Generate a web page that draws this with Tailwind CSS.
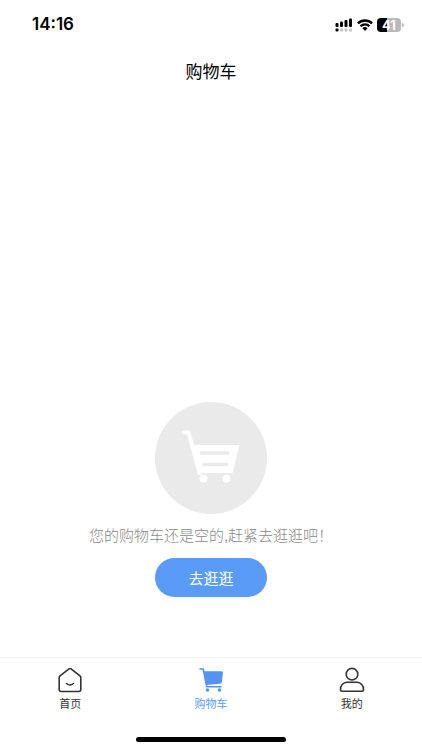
<!DOCTYPE html>
<html lang="zh-CN">
<head>
  <meta charset="UTF-8" />
  <meta name="viewport" content="width=device-width, initial-scale=1.0" />
  <title>购物车</title>
  <script src="https://cdn.jsdelivr.net/npm/@tailwindcss/browser@4"></script>
</head>
<body class="min-h-screen flex flex-col bg-white text-black font-['Liberation_Sans','Noto_Sans_CJK_SC',sans-serif]">
  <!-- Status bar -->
  <div class="h-12 flex items-center justify-between pl-8 pr-[18px] pt-0.5 font-[Inter,sans-serif]">
    <span class="text-[17px] font-semibold">14:16</span>
    <div class="flex items-center gap-1">
      <svg class="w-[18px] h-[14px]" viewBox="0 0 18 14" aria-label="信号">
        <g fill="#000">
          <rect x="0.5" y="5" width="3" height="4" rx="1" />
          <rect x="5" y="3.5" width="3" height="5.5" rx="1" />
          <rect x="9.5" y="2" width="3" height="7" rx="1" />
          <rect x="14" y="0.500" width="3" height="8.500" rx="1" />
          <rect x="0.5" y="10.5" width="3" height="3" rx="1" />
        </g>
        <g fill="#c4c4c4">
          <rect x="5" y="10.5" width="3" height="3" rx="1" />
          <rect x="9.5" y="10.5" width="3" height="3" rx="1" />
          <rect x="14" y="10.5" width="3" height="3" rx="1" />
        </g>
      </svg>
      <svg class="w-4 h-3" viewBox="0 0 16 12" fill="none" stroke="#000" stroke-width="2.3" aria-label="Wi-Fi">
        <path d="M0.9 4.4a10.2 10.2 0 0 1 14.2 0" />
        <path d="M3.5 7.3a6.4 6.4 0 0 1 9 0" />
        <path d="M8 12L5.4 9.3a3.8 3.8 0 0 1 5.2 0z" fill="#000" stroke="none" />
      </svg>
      <div class="flex items-center gap-px">
        <div class="w-6 h-[14px] rounded-[4px] bg-linear-to-r from-black from-42% to-[#b9b9b9] to-42% flex items-center justify-center text-white text-[13px] leading-none font-bold">41</div>
        <div class="w-0.5 h-1 rounded-r bg-[#b9b9b9]"></div>
      </div>
    </div>
  </div>

  <header class="h-[50px] flex items-center justify-center">
    <h1 class="text-[17px]">购物车</h1>
  </header>

  <!-- Empty cart -->
  <main class="flex-1 flex flex-col items-center justify-end pb-15">
    <svg class="size-28" viewBox="0 0 112 112" aria-hidden="true">
      <circle cx="56" cy="56" r="56" fill="#eaeaea" />
      <path d="M28.5 30.5h5L44.5 71" fill="none" stroke="#fff" stroke-width="4" stroke-linecap="round" stroke-linejoin="round" />
      <path d="M36 43h48.500L77.500 71H43.500z" fill="#fff" />
      <path d="M46.500 51H73M49 62.500h22.500" stroke="#eaeaea" stroke-width="3.500" stroke-linecap="round" />
      <circle cx="48.500" cy="76.500" r="4" fill="#fff" />
      <circle cx="71.500" cy="76.500" r="4" fill="#fff" />
    </svg>
    <p class="mt-2.5 text-[15px] leading-6 text-[#888] font-light">您的购物车还是空的,赶紧去逛逛吧！</p>
    <button type="button" class="mt-2.5 w-28 h-[39px] pt-1 rounded-full bg-[#5b9bf8] text-white text-[15px] cursor-pointer">去逛逛</button>
  </main>

  <!-- Tab bar -->
  <nav class="border-t border-[#f0f0f0] grid grid-cols-3 pt-2 pb-[25px] text-[11px] leading-4 text-[#333]">
    <a href="#" class="flex flex-col items-center gap-0.5">
      <svg class="size-7" viewBox="0 0 28 28" fill="none" stroke="#333" stroke-width="1.600" stroke-linecap="round" stroke-linejoin="round">
        <path d="M13 2.900a1.600 1.600 0 0 1 2 0l9 7a2 2 0 0 1 .8 1.600V23.500a2 2 0 0 1-2 2H5.200a2 2 0 0 1-2-2V11.500a2 2 0 0 1 .8-1.600z" />
        <path d="M10.500 17.500q3.500 3 7 0" />
      </svg>
      首页
    </a>
    <a href="#" class="flex flex-col items-center gap-0.5 text-[#5b9bf8]" aria-current="page">
      <svg class="size-7" viewBox="0 0 28 28" fill="#5493f2">
        <path d="M3 3h3.200L9.800 20.800H24" fill="none" stroke="#5493f2" stroke-width="1.600" stroke-linecap="round" stroke-linejoin="round" />
        <path d="M6.800 5.200H24.600a1.400 1.400 0 0 1 1.400 1.500L24.800 16.300a1.600 1.600 0 0 1-1.500 1.400L9.200 19z" />
        <circle cx="10.500" cy="24" r="1.800" />
        <circle cx="22.500" cy="24" r="1.800" />
      </svg>
      购物车
    </a>
    <a href="#" class="flex flex-col items-center gap-0.5">
      <svg class="size-7" viewBox="0 0 28 28" fill="none" stroke="#333" stroke-width="1.600" stroke-linejoin="round">
        <circle cx="14" cy="8.200" r="5.800" />
        <path d="M9 16.300h10a6.800 6.800 0 0 1 6.500 7.300a1.700 1.700 0 0 1-1.700 1.700H4.200a1.700 1.700 0 0 1-1.700-1.700A6.800 6.800 0 0 1 9 16.300z" />
      </svg>
      我的
    </a>
  </nav>

  <!-- Home indicator -->
  <div class="flex justify-center pb-2">
    <div class="w-[150px] h-[5px] rounded-full bg-black"></div>
  </div>
</body>
</html>
